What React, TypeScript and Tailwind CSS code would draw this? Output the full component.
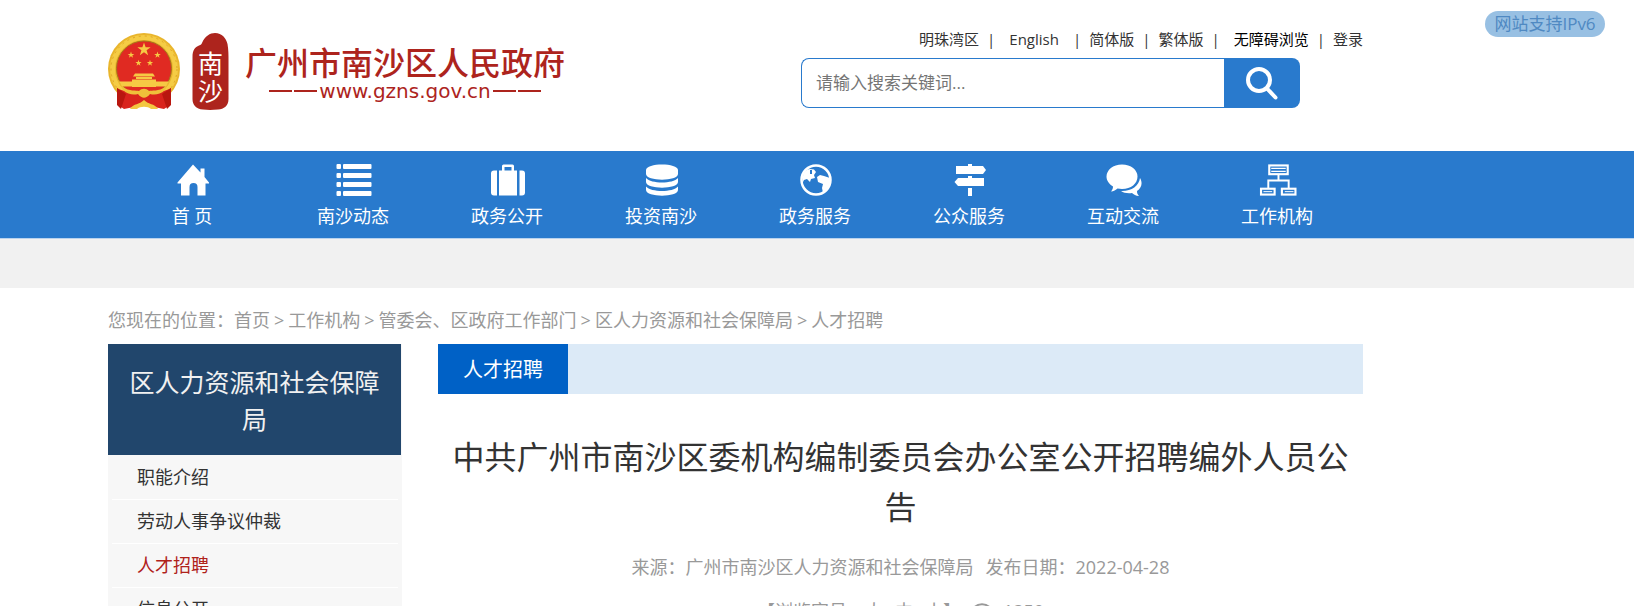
import React, { useState } from "react";

const navItems = [
    { label: "首 页", icon: <HomeIcon />, width: "w-[168px]" },
    { label: "南沙动态", icon: <ListIcon />, width: "w-[154px]" },
    { label: "政务公开", icon: <SuitcaseIcon />, width: "w-[154px]" },
    { label: "投资南沙", icon: <DatabaseIcon />, width: "w-[154px]" },
    { label: "政务服务", icon: <GlobeIcon />, width: "w-[154px]" },
    { label: "公众服务", icon: <SignpostIcon />, width: "w-[154px]" },
    { label: "互动交流", icon: <ChatIcon />, width: "w-[154px]" },
    { label: "工作机构", icon: <OrgIcon />, width: "w-[154px]" },
];

const crumbs = ["首页", "工作机构", "管委会、区政府工作部门", "区人力资源和社会保障局", "人才招聘"];

const sideItems = ["职能介绍", "劳动人事争议仲裁", "人才招聘", "信息公开"];

function HomeIcon() {
    return (
        <svg viewBox="0 0 32 32" className="h-8 w-8" fill="currentColor">
            <path d="M16 0.500 L23.500 8.500 V4.500 H27.500 V13 L32 18.500 V19.500 H28.500 V31.500 H20.500 V23 a4 4 0 0 0 -8 0 V31.500 H4 V19.500 H0.500 V18.500 Z" />
        </svg>
    );
}

function ListIcon() {
    return (
        <svg viewBox="0 0 36 32" className="h-8 w-9" fill="currentColor">
            {[0, 9, 18, 27].map((y) => (
                <g key={y}>
                    <rect x="0.500" y={y} width="4.500" height="5" rx="1" />
                    <rect x="7" y={y} width="28.500" height="5" rx="1" />
                </g>
            ))}
        </svg>
    );
}

function SuitcaseIcon() {
    return (
        <svg viewBox="0 0 34 32" className="h-8 w-[34px]" fill="currentColor">
            <path d="M8 6.500 H11 V2 a1.500 1.500 0 0 1 1.500 -1.500 H21.500 A1.500 1.500 0 0 1 23 2 V6.500 H26 V31.500 H8 Z M13.500 6.500 H20.500 V3 H13.500 Z" fillRule="evenodd" />
            <path d="M6 6.500 V31.500 H3 a3 3 0 0 1 -3 -3 V9.500 a3 3 0 0 1 3 -3 Z M28.500 6.500 H31 a3 3 0 0 1 3 3 V28.500 a3 3 0 0 1 -3 3 H28.500 Z" />
        </svg>
    );
}

function DatabaseIcon() {
    return (
        <svg viewBox="0 0 32 32" className="h-8 w-8" fill="currentColor">
            <path d="M0 6 C0 -1.500 32 -1.500 32 6 V10 C32 17.500 0 17.500 0 10 Z" />
            <path d="M0 14 C5 20 27 20 32 14 V18 C32 25.500 0 25.500 0 18 Z" />
            <path d="M0 22.500 C5 28.500 27 28.500 32 22.500 V26 C32 33.500 0 33.500 0 26 Z" />
        </svg>
    );
}

function GlobeIcon() {
    return (
        <svg viewBox="0 0 32 32" className="h-8 w-8" fill="currentColor">
            <circle cx="16" cy="16" r="14.500" fill="none" stroke="currentColor" strokeWidth="2.500" />
            <path d="M3 12 C4 8 7 5 10 5 L14 5.500 L16 8 L14 11 L15 14 L11 15 L10 18 L7 15 L4 16 L2 20 Z" />
            <path d="M17 13 L20 11 L24 12 L30 14 C31 21 28 26 23 29 L22 24 L23 20 L18 18 Z" />
            <path d="M10 6 h2 v4 h-2 Z" fill="#297acd" />
        </svg>
    );
}

function SignpostIcon() {
    return (
        <svg viewBox="0 0 32 32" className="h-8 w-8" fill="currentColor">
            <path d="M14 0 H18 V2 H29 L32 6 L29 10 H2 V2 H14 Z" />
            <path d="M14 12 H18 V14 H30 V22 H4 L0.500 18 L4 14 H14 Z" />
            <rect x="14" y="24" width="4" height="8" />
        </svg>
    );
}

function ChatIcon() {
    return (
        <svg viewBox="0 0 36 32" className="h-8 w-9" fill="currentColor">
            <path d="M16 0.500 C25 0.500 31.500 6 31.500 12.500 C31.500 19.500 25 25 16 25 L11.500 24.500 C10 26 7.500 27.500 5 27.500 C6.500 26 7 24 7 22.500 C3 20 0.500 16.500 0.500 12.500 C0.500 6 7 0.500 16 0.500 Z" />
            <path d="M34 14 C37 19 35.500 24 31 27 C31 29 31.500 30.500 33 32 C30 32 27.500 30.500 26 29 C22 29.500 17.500 29 15 27 C25 27.500 33 22 34 14 Z" />
        </svg>
    );
}

function OrgIcon() {
    return (
        <svg viewBox="0 0 38 33" className="h-8 w-[38px]" fill="none" stroke="currentColor" strokeWidth="2.200">
            <rect x="10" y="1.500" width="19" height="9" />
            <path d="M12 4.500 H27 M12 7.500 H27" strokeWidth="1.300" />
            <path d="M19.500 11 V17 M9 25 V17 H30 V25" strokeWidth="2" />
            <rect x="1.500" y="25.500" width="14" height="6" />
            <rect x="23" y="25.500" width="14" height="6" />
            <path d="M4 28.500 H13 M26 28.500 H35" strokeWidth="1" />
        </svg>
    );
}

function Star({ x, y, r }: { x: number; y: number; r: number }) {
    return (
        <path
            transform={`translate(${x} ${y}) scale(${r})`}
            d="M0 -1 L0.230 -0.310 L0.950 -0.310 L0.370 0.120 L0.590 0.810 L0 0.380 L-0.590 0.810 L-0.370 0.120 L-0.950 -0.310 L-0.230 -0.310 Z"
        />
    );
}

function Emblem() {
    return (
        <svg viewBox="0 0 72 77" className="h-[77px] w-[72px]">
            <circle cx="36" cy="36" r="36" fill="#e9b52c" />
            <circle cx="36" cy="36" r="31.500" fill="none" stroke="#f5cc45" strokeWidth="5" />
            <circle cx="36" cy="36" r="33" fill="none" stroke="#dfa426" strokeWidth="1" strokeDasharray="2 4" />
            <circle cx="36" cy="35.500" r="27.500" fill="#e02a22" stroke="#a8741a" strokeWidth="1" />
            <g fill="#f6c944">
                <Star x={36} y={16.500} r={7} />
                <Star x={23} y={22} r={3.500} />
                <Star x={49.500} y={22} r={3.500} />
                <Star x={30.500} y={30} r={3.300} />
                <Star x={42} y={30} r={3.300} />
                <path d="M27 40.500 H45 L47 43.500 H25 Z M28 44 H44 V46 H28 Z M24 46.500 H48 V54 H24 Z" />
                <path d="M11 48.500 H61 L58 53.500 H14 Z" />
            </g>
            <path d="M9 55 C20 62 52 62 63 55 L62 72 L56 76 L46 74 L40 70 H32 L26 74 L16 76 L10 72 Z" fill="#d9241d" />
            <path d="M9 55 L18 61 L13 76 L9 72 Z M63 55 L54 61 L59 76 L63 72 Z" fill="#b9170f" />
            <path d="M14 53.500 C22 59 28 57 31 58 C34 55 38 55 41 58 C44 57 50 59 58 53.500 L57 57 C52 62 46 62 42 61 C38 66 34 66 30 61 C26 62 20 62 15 57 Z" fill="#efc03a" />
            <path d="M22 76 C26 70 31 72 36 67 C41 72 46 70 50 76 H43 C40 73 32 73 29 76 Z" fill="#f3c741" />
        </svg>
    );
}

function Seal() {
    return (
        <div className="relative h-[77px] w-[37px]">
            <svg viewBox="0 0 37 77" className="h-full w-full">
                <path d="M10 10 C13 3 18 0 23 0 C30 0 34 5 35.500 11 C36.500 17 36.500 22 36.500 28 V66 C36.500 73 32 76 26 76.500 C20 77 16 77 11 76.500 C4 76 0.500 72 0.500 66 V24 C0.500 17 3 14 7 12.500 C9 12 9.500 11 10 10 Z" fill="#ad241d" />
            </svg>
            <span className="absolute inset-x-0 top-4 flex flex-col text-center text-[25px] leading-7 text-white">
                <span>南</span>
                <span>沙</span>
            </span>
        </div>
    );
}

function Divider({ className = "" }: { className?: string }) {
    return <span className={className} aria-hidden="true">|</span>;
}

export default function App() {
    const [keyword, setKeyword] = useState("");
    const [active, setActive] = useState("人才招聘");

    return (
        <div className="relative h-screen overflow-hidden bg-white font-['Open_Sans','Noto_Sans_CJK_SC',sans-serif] text-[#333]">
            <a href="#ipv6" className="absolute top-[11px] right-[29px] h-[26px] w-[120px] rounded-full bg-[#98c0e3] text-center text-[17px] leading-[26px] text-[#4f89c2]">
                网站支持IPv6
            </a>

            {/* Header */}
            <header className="ml-[108px] flex h-[151px] max-w-[1255px] justify-between">
                <a href="#home" className="flex items-start pt-[33px] text-[#ad241d]">
                    <Emblem />
                    <span className="ml-3">
                        <Seal />
                    </span>
                    <span className="ml-4 flex flex-col pt-3">
                        <span className="text-[32px] leading-9 font-medium">广州市南沙区人民政府</span>
                        <span className="mx-6 flex items-center gap-0.5 font-['DejaVu_Sans',sans-serif] text-[20px] leading-5">
                            <i className="h-0.5 flex-1 bg-[#ad241d]" />
                            <i className="h-0.5 flex-1 bg-[#ad241d]" />
                            www.gzns.gov.cn
                            <i className="h-0.5 flex-1 bg-[#ad241d]" />
                            <i className="h-0.5 flex-1 bg-[#ad241d]" />
                        </span>
                    </span>
                </a>

                <div className="w-[562px] pt-[27px]">
                    <div className="flex h-[31px] items-start justify-end text-[15px] leading-6 whitespace-pre">
                        <a href="#bay">明珠湾区</a>
                        <Divider className="ml-2 mr-3.5" />
                        <a href="#en">English</a>
                        <Divider className="ml-3.5 mr-2" />
                        <a href="#jt">简体版</a>
                        <Divider className="mx-2" />
                        <a href="#ft">繁体版</a>
                        <Divider className="ml-2 mr-3.5" />
                        <a href="#wza" className="text-black">无障碍浏览</a>
                        <Divider className="mx-2" />
                        <a href="#login">登录</a>
                    </div>
                    <form className="flex h-[50px] w-[499px]" onSubmit={(e) => e.preventDefault()}>
                        <input
                            type="text"
                            aria-label="搜索关键词"
                            value={keyword}
                            onChange={(e) => setKeyword(e.target.value)}
                            placeholder="请输入搜索关键词..."
                            className="min-w-0 flex-1 rounded-l-lg border border-r-0 border-[#297acd] px-3.5 text-[17px] outline-none placeholder:text-[#757575]"
                        />
                        <button type="submit" aria-label="搜索" className="flex w-[76px] items-center justify-center rounded-r-lg bg-[#297acd] text-white">
                            <svg viewBox="0 0 32 34" className="h-[34px] w-8" fill="none" stroke="currentColor" strokeWidth="4" strokeLinecap="round">
                                <circle cx="13" cy="14" r="11" />
                                <path d="M21 22.500 L29.500 31.500" />
                            </svg>
                        </button>
                    </form>
                </div>
            </header>

            {/* Main navigation */}
            <nav className="border-b border-[#b9d3ee] bg-[#297acd] pl-[108px] text-white">
                <ul className="flex h-[87px]">
                    {navItems.map((item) => (
                        <li key={item.label} className={item.width}>
                            <a href="#nav" className="flex flex-col items-center pt-[13px] text-[18px] leading-7">
                                <span className="pl-0.5">{item.icon}</span>
                                <span className="pt-1.5">{item.label}</span>
                            </a>
                        </li>
                    ))}
                </ul>
            </nav>
            <div className="h-[49px] bg-[#f1f1f1]" />

            <div className="ml-[108px] max-w-[1255px]">
                <div className="h-14 pt-4 text-[18px] leading-8 text-[#999]">
                    您现在的位置：
                    {crumbs.map((crumb, i) => (
                        <React.Fragment key={crumb}>
                            {i > 0 && <span className="px-1">&gt;</span>}
                            <a href="#crumb">{crumb}</a>
                        </React.Fragment>
                    ))}
                </div>

                <div className="flex items-start gap-9">
                    <aside className="w-[294px] shrink-0 bg-[#f7f7f7]">
                        <h2 className="mr-px bg-[#21466c] px-5 pt-5 pb-[17px] text-center text-[25px] leading-[37px] text-[#f1f1f1]">
                            区人力资源和社会保障局
                        </h2>
                        <ul className="px-1 pt-px">
                            {sideItems.map((item) => (
                                <li key={item} className="border-b border-white">
                                    <a
                                        href="#side"
                                        onClick={() => setActive(item)}
                                        className={`block pl-[25px] text-[18px] leading-[43px] ${active === item ? "text-[#b0221b]" : "text-[#333]"}`}
                                    >
                                        {item}
                                    </a>
                                </li>
                            ))}
                        </ul>
                    </aside>

                    <main className="min-w-0 flex-1">
                        <div className="flex bg-[#dceaf7]">
                            <h3 className="bg-[#0061c6] px-[25px] pt-0.5 text-[20px] leading-[48px] text-white">人才招聘</h3>
                        </div>
                        <h1 className="pt-[38px] text-center text-[32px] leading-[50px]">
                            中共广州市南沙区委机构编制委员会办公室公开招聘编外人员公告
                        </h1>
                        <div className="pt-3.5 text-center text-[18px] leading-[42px] text-[#999]">
                            <p>
                                <span className="mr-3">来源：广州市南沙区人力资源和社会保障局</span>
                                <span>发布日期：2022-04-28</span>
                            </p>
                            <p className="flex items-center justify-center pt-0.5">
                                【浏览字号：
                                <button type="button" className="mr-3">大</button>
                                <button type="button" className="mr-3">中</button>
                                <button type="button">小</button>
                                】
                                <svg viewBox="0 0 22 16" className="mx-2.5 h-4 w-[22px]" fill="none" stroke="currentColor" strokeWidth="2">
                                    <path d="M1 8 C5 -1 17 -1 21 8 C17 17 5 17 1 8 Z" />
                                    <circle cx="11" cy="8" r="3" />
                                </svg>
                                1350
                            </p>
                        </div>
                    </main>
                </div>
            </div>
        </div>
    );
}
